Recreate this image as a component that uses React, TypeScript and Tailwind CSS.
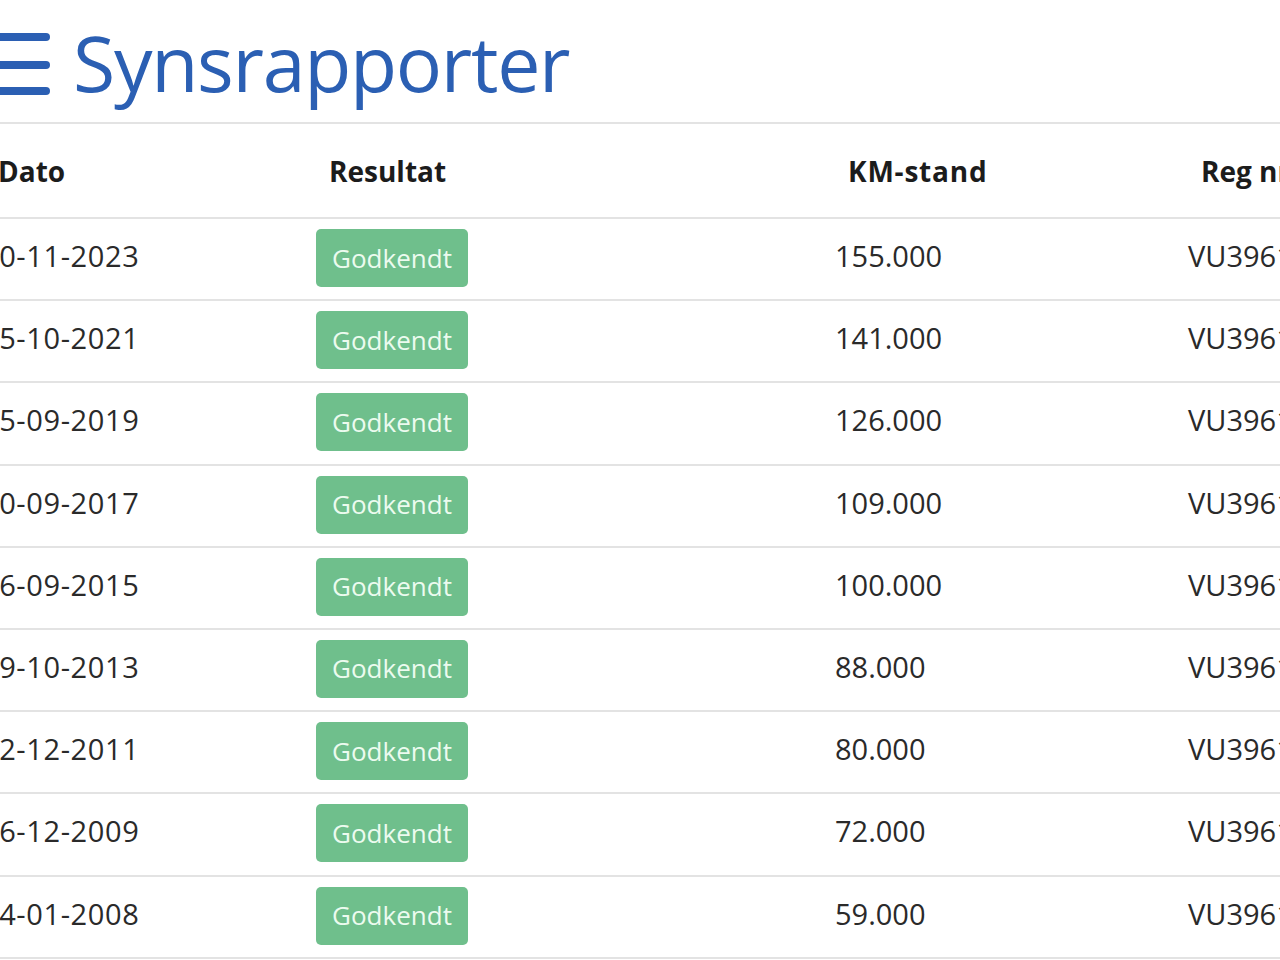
const rows = [
  { date: "10-11-2023", km: "155.000" },
  { date: "15-10-2021", km: "141.000" },
  { date: "25-09-2019", km: "126.000" },
  { date: "20-09-2017", km: "109.000" },
  { date: "16-09-2015", km: "100.000" },
  { date: "09-10-2013", km: "88.000" },
  { date: "12-12-2011", km: "80.000" },
  { date: "16-12-2009", km: "72.000" },
  { date: "14-01-2008", km: "59.000" },
];

const cols = "grid grid-cols-[332px_519px_353px_320px]";

const App = () => {
  return (
    <div
      className="h-[960px] w-[1280px] overflow-hidden bg-white"
      style={{ fontFamily: '"Open Sans", "Noto Sans", sans-serif' }}
    >
      <div className="ml-[-24px] w-[1560px]">
        <header className="flex h-[124px] items-center gap-[17px] border-b-2 border-[#e3e3e3] pt-[2px]">
          <svg width="80" height="70" viewBox="0 0 80 70" className="shrink-0">
            <g stroke="#2b5fb3" strokeWidth="8" strokeLinecap="round">
              <line x1="8" y1="10" x2="70" y2="10" />
              <line x1="8" y1="38" x2="70" y2="38" />
              <line x1="8" y1="64" x2="70" y2="64" />
            </g>
          </svg>
          <h1 className="text-[77px] leading-none font-normal tracking-[-1.3px] text-[#2b5fb3]">
            Synsrapporter
          </h1>
        </header>
        <div className={`${cols} h-[95px] items-center border-b-2 border-[#e3e3e3] text-[28px] font-bold text-[#1c1c1c]`}>
          <div className="pl-[22px]">Dato</div>
          <div className="pl-[21px]">Resultat</div>
          <div className="pl-[21px] tracking-[0.8px]">KM-stand</div>
          <div className="pl-[21px]">Reg nr.</div>
        </div>
        {rows.map((row) => (
          <div
            key={row.date}
            className={`${cols} h-[82.2px] items-start border-b-2 border-[#e3e3e3] text-[29px] text-[#2a2a2a]`}
          >
            <div className="pl-[6px] pt-[15px] tracking-[0.6px]">{row.date}</div>
            <div className="pl-[8px] pt-[10px]">
              <span className="inline-flex h-[58px] w-[152px] items-center justify-center rounded-[5px] bg-[#6fbf8c] text-[26px] text-[#ecfbef]">
                Godkendt
              </span>
            </div>
            <div className="pl-[8px] pt-[15px]">{row.km}</div>
            <div className="pl-[8px] pt-[15px]">VU39612</div>
          </div>
        ))}
      </div>
    </div>
  );
};

export default App;
